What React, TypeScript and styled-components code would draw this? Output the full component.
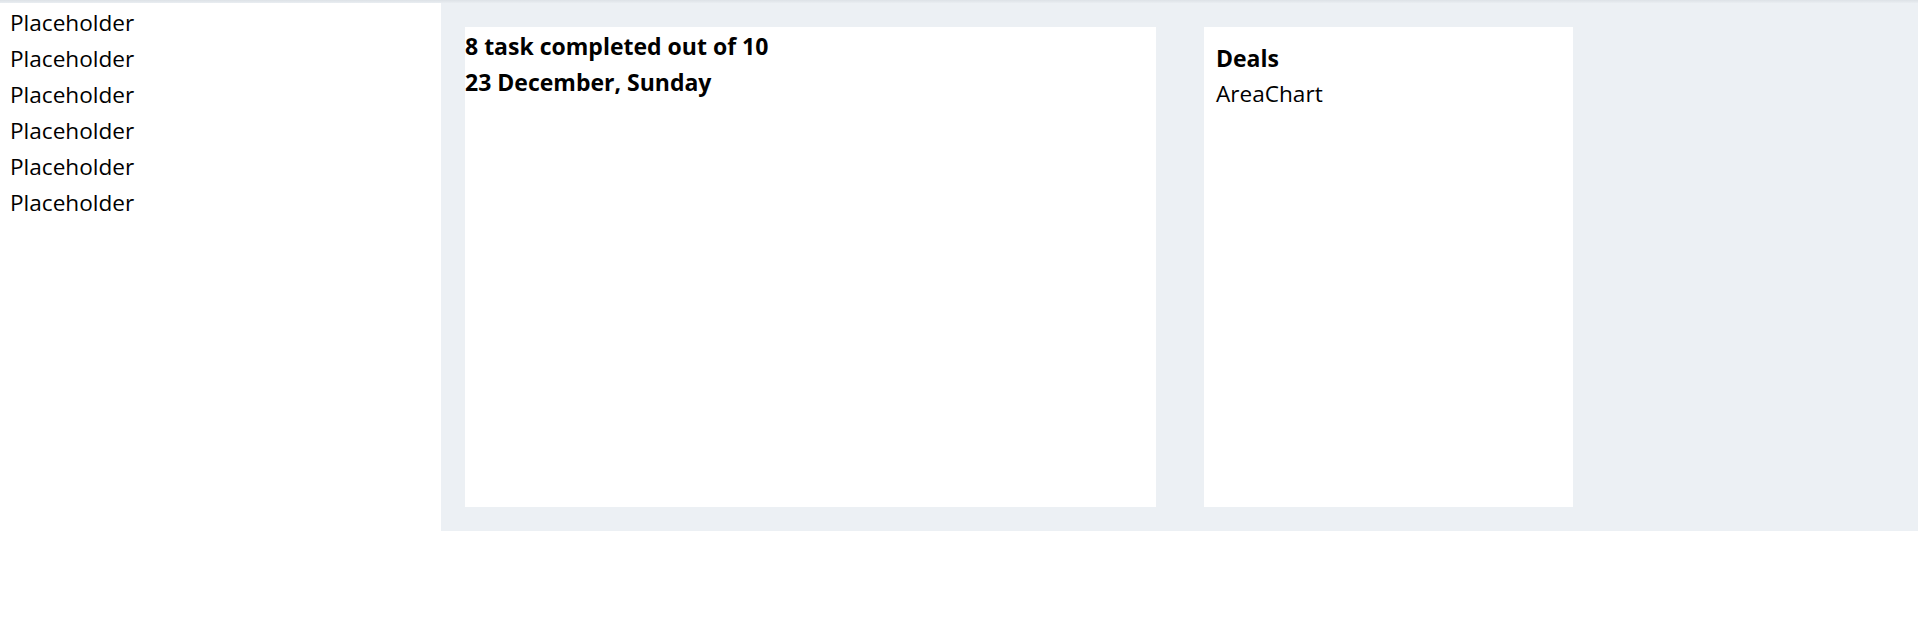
import styled, { createGlobalStyle } from 'styled-components'


/**
 * Global
 */
const GlobalStyle = createGlobalStyle`
  html, body {
    margin: 0;
    padding: 0;
    background: #fff;
  }

  body {
    font-family: "Open Sans", "Noto Sans", Arial, sans-serif;
    color: #000;
  }
`


/**
 * Data
 */
const menuItems = ['Placeholder', 'Placeholder', 'Placeholder', 'Placeholder', 'Placeholder', 'Placeholder']


/**
 * Style
 */
const Page = styled.div`
  display: flex;
  flex-direction: column;
  width: 100%;
`

const TopBar = styled.header`
  height: 3px;
  width: 100%;
  background: linear-gradient(to bottom, #dde2e7, #e9edf1);
`

const Body = styled.div`
  display: flex;
  align-items: stretch;
`

const Sidebar = styled.nav`
  flex: 0 0 441px;
  background: #fff;
`

const MenuList = styled.ul`
  list-style: none;
  margin: 0;
  padding: 2px 0 0 10px;
`

const MenuItem = styled.li`
  font-size: 22.6px;
  line-height: 36px;
  color: #000;
`

const Main = styled.main`
  flex: 1;
  display: flex;
  gap: 48px;
  padding: 24px;
  background: #ecf0f4;
`

const Card = styled.section<{ $width: number; $padded?: boolean }>`
  flex: 0 0 ${({ $width }) => $width}px;
  height: 480px;
  box-sizing: border-box;
  padding: ${({ $padded }) => ($padded ? '13px 12px' : '1px 0 0')};
  background: #fff;
`

const Title = styled.div`
  font-size: 23px;
  font-weight: 700;
  line-height: 36px;
`

const Text = styled.div`
  font-size: 22.6px;
  line-height: 36px;
`


/**
 * Component
 */
const App = (): JSX.Element => {
  return (
    <Page>
      <GlobalStyle />
      <TopBar />
      <Body>
        <Sidebar>
          <MenuList>
            {menuItems.map((item, i) => (
              <MenuItem key={i}>{item}</MenuItem>
            ))}
          </MenuList>
        </Sidebar>
        <Main>
          <Card $width={691}>
            <Title>8 task completed out of 10</Title>
            <Title>23 December, Sunday</Title>
          </Card>
          <Card $width={369} $padded>
            <Title>Deals</Title>
            <Text>AreaChart</Text>
          </Card>
        </Main>
      </Body>
    </Page>
  )
}

export default App
